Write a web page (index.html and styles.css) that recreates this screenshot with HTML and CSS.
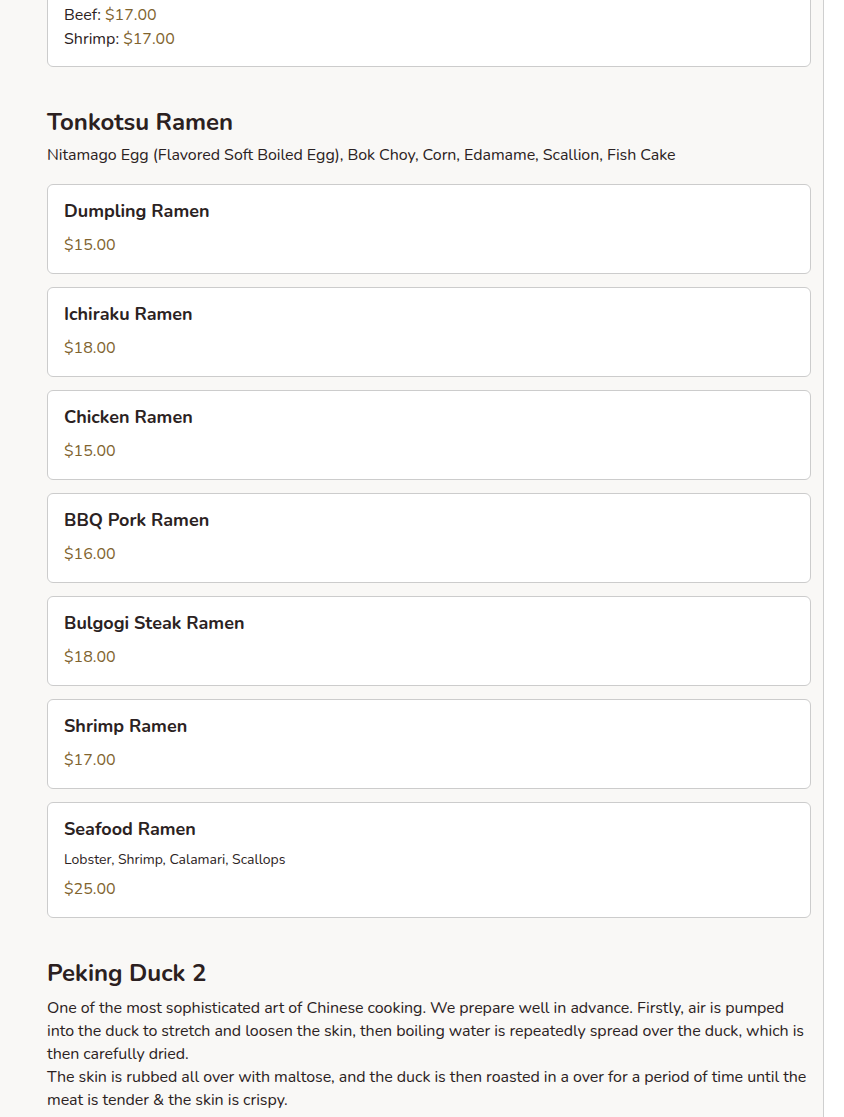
FILE: index.html
```html
<!DOCTYPE html>
<html lang="en">
<head>
<meta charset="utf-8">
<title>Menu</title>
<link rel="stylesheet" href="styles.css">
</head>
<body>
<div class="layout">
  <main class="menu">
    <div class="card card-cut">
      <div class="opt">Chicken: <span class="price">$15.00</span></div>
      <div class="opt">Beef: <span class="price">$17.00</span></div>
      <div class="opt">Shrimp: <span class="price">$17.00</span></div>
    </div>

    <section class="section">
      <h2 class="sec-title">Tonkotsu Ramen</h2>
      <p class="sec-desc">Nitamago Egg (Flavored Soft Boiled Egg), Bok Choy, Corn, Edamame, Scallion, Fish Cake</p>
      <div class="items">
        <div class="card"><div class="item-name">Dumpling Ramen</div><div class="price-line">$15.00</div></div>
        <div class="card"><div class="item-name">Ichiraku Ramen</div><div class="price-line">$18.00</div></div>
        <div class="card"><div class="item-name">Chicken Ramen</div><div class="price-line">$15.00</div></div>
        <div class="card"><div class="item-name">BBQ Pork Ramen</div><div class="price-line">$16.00</div></div>
        <div class="card"><div class="item-name">Bulgogi Steak Ramen</div><div class="price-line">$18.00</div></div>
        <div class="card"><div class="item-name">Shrimp Ramen</div><div class="price-line">$17.00</div></div>
        <div class="card"><div class="item-name">Seafood Ramen</div><div class="item-desc">Lobster, Shrimp, Calamari, Scallops</div><div class="price-line">$25.00</div></div>
      </div>
    </section>

    <section class="section section-next">
      <h2 class="sec-title">Peking Duck 2</h2>
      <p class="sec-desc sec-long">One of the most sophisticated art of Chinese cooking. We prepare well in advance. Firstly, air is pumped into the duck to stretch and loosen the skin, then boiling water is repeatedly spread over the duck, which is then carefully dried.<br>The skin is rubbed all over with maltose, and the duck is then roasted in a over for a period of time until the meat is tender &amp; the skin is crispy.<br>Served with homemade pancakes, cucumber, scallion and our special hoisin duck sauce on the side.</p>
    </section>
  </main>
  <aside class="side"></aside>
</div>
</body>
</html>
```
FILE: styles.css
```css
* { box-sizing: border-box; }
html, body { margin: 0; padding: 0; }
body {
  font-family: "Nunito", Lato, "Noto Sans", sans-serif;
  color: #2b2222;
  background: #ffffff;
  height: 1117px;
  overflow: hidden;
}
.layout {
  display: flex;
  height: 1117px;
}
.menu {
  width: 824px;
  flex: none;
  background: #f9f8f6;
  border-right: 1px solid #cfcfcf;
  padding: 0 12px 0 47px;
}
.side { flex: 1; background: #fff; }

.card {
  background: #fff;
  border: 1px solid #cccccc;
  border-radius: 6px;
  padding: 16px;
}
.card-cut {
  margin-top: -38px;
  padding-bottom: 15px;
}
.opt {
  font-size: 16px;
  line-height: 24px;
}
.price { color: #80632e; }

.section { margin-top: 39px; }
.section-next { margin-top: 39px; }
.sec-title {
  margin: 0 0 6px;
  font-size: 24px;
  line-height: 32px;
  font-weight: 700;
  color: #2b2020;
}
.sec-desc {
  margin: 0 0 17px;
  font-size: 16px;
  line-height: 23px;
  letter-spacing: -0.05px;
}
.sec-long { margin-top: 8px; }
.items {
  display: flex;
  flex-direction: column;
  gap: 13px;
}
.item-name {
  font-size: 18px;
  line-height: 20px;
  font-weight: 700;
  margin-bottom: 13px;
}
.item-desc {
  font-size: 14px;
  line-height: 18px;
  margin-top: -1px;
  margin-bottom: 9px;
}
.price-line {
  font-size: 16px;
  line-height: 23px;
  color: #80632e;
}
```
